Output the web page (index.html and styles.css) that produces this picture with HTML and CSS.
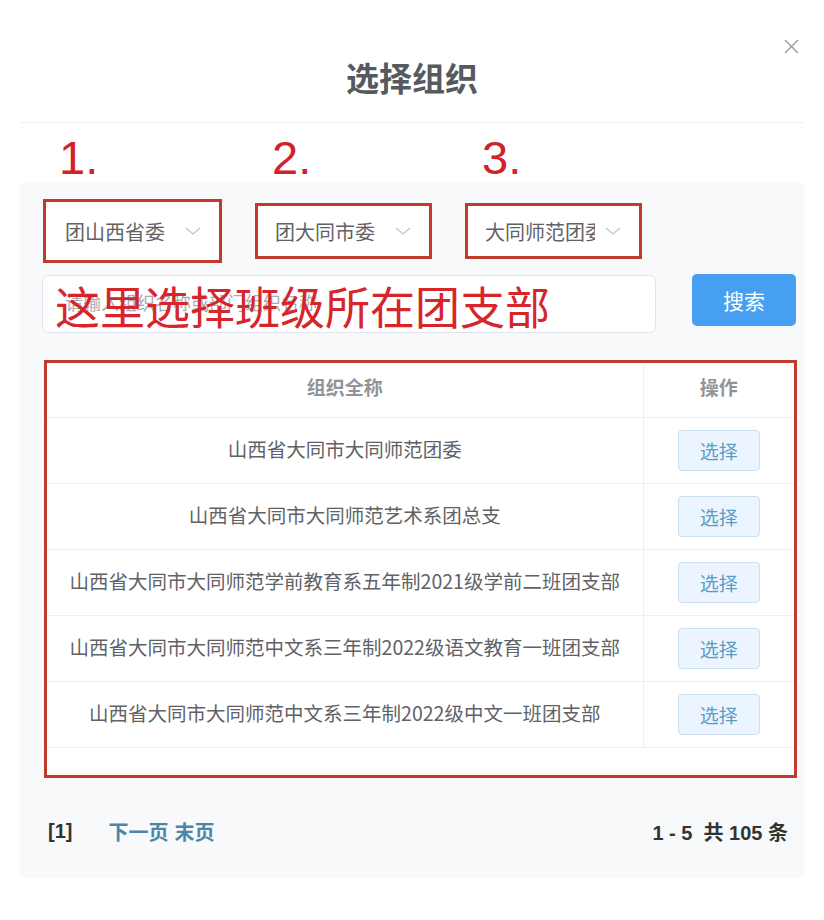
FILE: index.html
```html
<!DOCTYPE html>
<html lang="zh-CN">
<head>
<meta charset="utf-8">
<title>选择组织</title>
<link rel="stylesheet" href="styles.css">
</head>
<body>
<div class="dialog">
  <div class="dlg-head">
    <h1 class="title">选择组织</h1>
    <button class="close" aria-label="关闭">
      <svg width="15" height="15" viewBox="0 0 15 15"><path d="M1 1L14 14M14 1L1 14" stroke="#9a9a9a" stroke-width="1.4" fill="none"/></svg>
    </button>
  </div>
  <div class="steps">
    <span class="step">1.</span>
    <span class="step">2.</span>
    <span class="step">3.</span>
  </div>
  <div class="panel">
    <div class="selects">
      <div class="select select-tall">
        <span class="sel-text">团山西省委</span>
        <svg class="chev" width="16" height="8" viewBox="0 0 16 8"><path d="M1 1L8 7L15 1" stroke="#c0c4cc" stroke-width="1.2" fill="none"/></svg>
      </div>
      <div class="select">
        <span class="sel-text">团大同市委</span>
        <svg class="chev" width="16" height="8" viewBox="0 0 16 8"><path d="M1 1L8 7L15 1" stroke="#c0c4cc" stroke-width="1.2" fill="none"/></svg>
      </div>
      <div class="select">
        <span class="sel-text">大同师范团委</span>
        <svg class="chev" width="16" height="8" viewBox="0 0 16 8"><path d="M1 1L8 7L15 1" stroke="#c0c4cc" stroke-width="1.2" fill="none"/></svg>
      </div>
    </div>
    <div class="search-row">
      <div class="search-input">
        <span class="placeholder">请输入组织名称或部门组织名称</span>
        <span class="note">这里选择班级所在团支部</span>
      </div>
      <button class="btn-search">搜索</button>
    </div>
    <div class="table-frame">
      <table class="org-table">
        <thead>
          <tr><th class="col-name">组织全称</th><th class="col-op">操作</th></tr>
        </thead>
        <tbody>
          <tr><td class="col-name">山西省大同市大同师范团委</td><td class="col-op"><button class="btn-pick">选择</button></td></tr>
          <tr><td class="col-name">山西省大同市大同师范艺术系团总支</td><td class="col-op"><button class="btn-pick">选择</button></td></tr>
          <tr><td class="col-name">山西省大同市大同师范学前教育系五年制2021级学前二班团支部</td><td class="col-op"><button class="btn-pick">选择</button></td></tr>
          <tr><td class="col-name">山西省大同市大同师范中文系三年制2022级语文教育一班团支部</td><td class="col-op"><button class="btn-pick">选择</button></td></tr>
          <tr><td class="col-name">山西省大同市大同师范中文系三年制2022级中文一班团支部</td><td class="col-op"><button class="btn-pick">选择</button></td></tr>
        </tbody>
      </table>
    </div>
    <div class="pager">
      <div class="pager-left">
        <span class="cur">[1]</span>
        <a class="pg-link">下一页</a>
        <a class="pg-link">末页</a>
      </div>
      <div class="pager-right">1 - 5&nbsp; 共 105 条</div>
    </div>
  </div>
</div>
</body>
</html>
```
FILE: styles.css
```css
* { box-sizing: border-box; }
body {
  margin: 0;
  background: #fff;
  font-family: "Noto Sans CJK SC", "Noto Sans", sans-serif;
}
.dialog {
  width: 784px;
  margin-left: 20px;
}
.dlg-head {
  position: relative;
  height: 123px;
  padding-top: 32px;
  border-bottom: 1px solid #eef0f3;
  display: flex;
  justify-content: center;
}
.title {
  margin: 0;
  font-size: 33px;
  line-height: 90px;
  height: 90px;
  font-weight: 700;
  color: #555a60;
}
.close {
  position: absolute;
  right: 5px;
  top: 39px;
  width: 15px;
  height: 15px;
  padding: 0;
  border: 0;
  background: none;
  display: block;
}
.close svg { display: block; }
.steps {
  height: 60px;
  padding-top: 11px;
  padding-left: 39px;
  display: grid;
  grid-template-columns: 213px 210px 100px;
}
.step {
  font-family: "Liberation Sans", sans-serif;
  font-size: 47px;
  line-height: 48px;
  color: #cf2229;
}
.panel {
  background: #f7f9fb;
  padding: 16px 8px 22px 22px;
}
.selects {
  display: flex;
  align-items: center;
  gap: 33px;
  padding-left: 1px;
  height: 64px;
}
.select {
  width: 177px;
  height: 56px;
  background: #fff;
  border: 3px solid #c13a2c;
  display: flex;
  align-items: center;
  padding: 0 18px 0 17px;
  gap: 10px;
}
.select-tall {
  width: 179px;
  height: 64px;
  padding-left: 19px;
}
.sel-text {
  flex: 1;
  overflow: hidden;
  white-space: nowrap;
  font-size: 20px;
  color: #606266;
}
.chev { flex: none; display: block; }
.search-row {
  margin-top: 12px;
  display: flex;
  align-items: flex-start;
  gap: 36px;
}
.search-input {
  position: relative;
  width: 614px;
  height: 58px;
  background: #fff;
  border: 1px solid #e1e4ea;
  border-radius: 6px;
  padding-left: 22px;
}
.placeholder {
  font-size: 18px;
  line-height: 52px;
  color: #a8abb2;
}
.note {
  position: absolute;
  left: 12px;
  top: 7px;
  font-size: 45px;
  line-height: 46px;
  color: #d6252b;
  white-space: nowrap;
}
.btn-search {
  margin-top: -1px;
  width: 104px;
  height: 52px;
  border: 0;
  border-radius: 5px;
  background: #469ff0;
  color: #fff;
  font-family: inherit;
  font-size: 21px;
}
.table-frame {
  margin-top: 27px;
  margin-left: 2px;
  width: 753px;
  height: 418px;
  border: 3px solid #c13a2c;
  background: #fff;
}
.org-table {
  width: 100%;
  border-collapse: collapse;
}
.org-table th {
  height: 54px;
  font-size: 19px;
  font-weight: 700;
  color: #909399;
  border-bottom: 1px solid #ebeef5;
  padding: 0 0 6px;
}
.org-table td {
  height: 66px;
  font-size: 19.5px;
  color: #606266;
  border-bottom: 1px solid #ebeef5;
  text-align: center;
  padding: 0 0 3px;
}
.col-op {
  width: 151px;
  border-left: 1px solid #ebeef5;
  text-align: center;
}
.org-table td.col-op { padding: 0; }
.btn-pick {
  width: 82px;
  height: 41px;
  background: #ecf5ff;
  border: 1px solid #cadff0;
  border-radius: 4px;
  color: #5b9cc4;
  font-family: inherit;
  font-size: 19px;
  padding: 0;
}
.pager {
  margin-top: 28px;
  height: 50px;
  display: flex;
  align-items: center;
  justify-content: space-between;
  padding: 0 8px 0 6px;
  font-weight: 700;
  font-size: 20px;
}
.pager-left {
  display: flex;
  align-items: center;
}
.cur {
  font-family: "Liberation Sans", sans-serif;
  color: #333;
  margin-right: 36px;
}
.pg-link {
  color: #4a86a8;
  margin-right: 6px;
}
.pager-right {
  color: #333;
  font-family: "Liberation Sans", "Noto Sans CJK SC", sans-serif;
}
```
